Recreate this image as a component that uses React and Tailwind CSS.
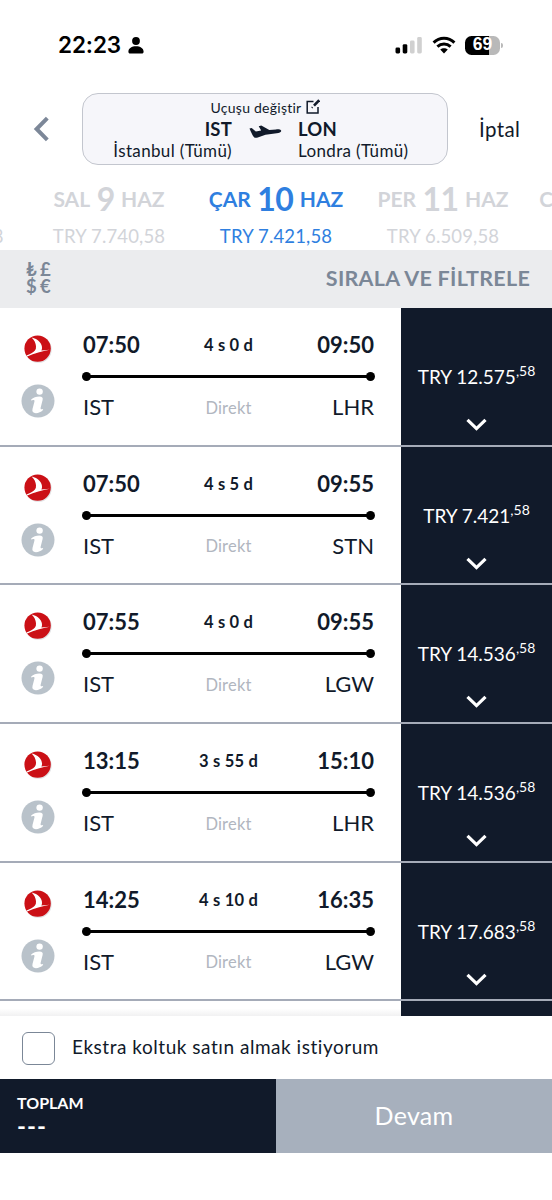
import React, { useState } from "react";

const flights = [
  { dep: "07:50", arr: "09:50", duration: "4 s 0 d", to: "LHR", price: "12.575" },
  { dep: "07:50", arr: "09:55", duration: "4 s 5 d", to: "STN", price: "7.421" },
  { dep: "07:55", arr: "09:55", duration: "4 s 0 d", to: "LGW", price: "14.536" },
  { dep: "13:15", arr: "15:10", duration: "3 s 55 d", to: "LHR", price: "14.536" },
  { dep: "14:25", arr: "16:35", duration: "4 s 10 d", to: "LGW", price: "17.683" },
];

function StatusBar() {
  return (
    <div className="flex h-[93px] items-start justify-between pt-[31px] pr-[49px] pl-[58px]">
      <div className="flex h-7 items-center gap-[7px] font-['Inter',sans-serif] text-[22.5px] font-semibold text-black">
        <span className="tracking-[-0.1px]">22:23</span>
        <svg width="16" height="17" viewBox="0 0 16 17" fill="currentColor">
          <circle cx="8" cy="4" r="3.9" />
          <path d="M0.4 14.6c0-3.4 3.4-5.4 7.6-5.4s7.6 2 7.6 5.4c0 1.4-.6 2-1.9 2H2.3c-1.3 0-1.9-.6-1.9-2z" />
        </svg>
      </div>
      <div className="flex h-7 items-center">
        <svg width="28" height="18" viewBox="0 0 28 18">
          <rect x="0.5" y="11.5" width="4.6" height="6" rx="1.4" fill="#000" />
          <rect x="7.7" y="8.2" width="4.6" height="9.3" rx="1.4" fill="#000" />
          <rect x="15" y="4.6" width="4.6" height="12.9" rx="1.4" fill="#d0d0d0" />
          <rect x="22.2" y="1" width="4.6" height="16.5" rx="1.4" fill="#d0d0d0" />
        </svg>
        <svg className="ml-[9px]" width="24" height="18" viewBox="0 0 24 18">
          <g fill="none" stroke="#000" strokeWidth="3">
            <path d="M1.6 6.6C7.5 0.9 16.5 0.9 22.4 6.6" />
            <path d="M5.4 10.6c3.8-3.5 9.4-3.5 13.2 0" />
          </g>
          <path d="M8.2 13.6c2.2-1.9 5.4-1.9 7.6 0L12 17.5z" fill="#000" />
        </svg>
        <div className="ml-[9.5px] flex h-[19px] w-[35px] items-center justify-center rounded-[6.5px] bg-[linear-gradient(90deg,#000_69%,#b9b9b9_69%)] font-['Liberation_Sans',sans-serif] text-[17.5px] leading-none font-bold text-white">
          69
        </div>
        <div className="ml-px h-[5px] w-[2px] rounded-r-full bg-[#b9b9b9]"></div>
      </div>
    </div>
  );
}

function Header() {
  return (
    <div className="flex h-[72px] items-center">
      <button className="ml-[33px] w-[49px]">
        <svg width="17" height="26" viewBox="0 0 17 26" fill="none" stroke="#7c8798" strokeWidth="4">
          <path d="M14.3 2.2L3.6 13l10.7 10.8" />
        </svg>
      </button>
      <div className="h-[72px] w-[366px] rounded-[16px] border border-[#c3c6ce] bg-[#f6f6fa] pt-[4px]">
        <div className="flex h-[18px] items-center justify-center gap-[5px] pl-px text-[14px] tracking-[0.25px]">
          <span>Uçuşu değiştir</span>
          <svg className="-mt-px" width="14" height="15" viewBox="0 0 14 15" fill="none" stroke="currentColor" strokeWidth="1.5">
            <path d="M7.5 2.5H1.2V14H12V8" />
            <path d="M5.8 8.8l.7-.7" strokeWidth="1.7" />
            <path d="M8 6.7L13.2 1.2" strokeWidth="2.6" />
          </svg>
        </div>
        <div className="flex">
          <div className="w-[149px] text-right">
            <div className="h-[24px] text-[18.5px] leading-[26px] font-bold tracking-[0.2px]">IST</div>
            <div className="mt-px text-[17px] leading-[20px] tracking-[0.35px]">İstanbul (Tümü)</div>
          </div>
          <svg className="mt-[9px] ml-[17px]" width="33" height="15" viewBox="0 0 33 15" fill="currentColor">
            <path d="M0.5 3.6l2.2-.7 4.100 3.500 5.400-.9L9.700 1.300l2.600-.8 8 4.600 6.800-.7c2.700-.2 4.700.3 5.100 1.300.3 1.200-1.900 2.100-4.500 2.500L16.500 9.700l-7.700 2.700c-1.300.5-2.800.6-3.800-.1C3.300 10.200 1.900 6.900.5 3.600z" />
          </svg>
          <div className="ml-[16px]">
            <div className="h-[24px] text-[18.5px] leading-[26px] font-bold tracking-[0.2px]">LON</div>
            <div className="mt-px text-[17px] leading-[20px] tracking-[0.35px]">Londra (Tümü)</div>
          </div>
        </div>
      </div>
      <button className="ml-[31px] text-[20.5px] tracking-[0.4px]">İptal</button>
    </div>
  );
}

function DayTab({ day, date, month, price, active }) {
  return (
    <div className={"flex w-[167px] shrink-0 flex-col items-center whitespace-nowrap " + (active ? "text-[#2f7fe0]" : "text-[#d2d4d9]")}>
      <div className="flex h-[34px] items-center gap-[6.5px] text-[21px] leading-[34px] font-bold">
        <span>{day}</span>
        <span className="text-[32px] font-bold tracking-[-0.6px]">{date}</span>
        <span>{month}</span>
      </div>
      <div className="mt-[9px] text-[18.5px] leading-[22px] tracking-[0.15px]">{price}</div>
    </div>
  );
}

function DayTabs() {
  return (
    <div className="flex h-[85px] justify-center overflow-hidden pt-[17px]">
      <DayTab day="PZT" date="8" month="HAZ" price="TRY 10.740,58" />
      <DayTab day="SAL" date="9" month="HAZ" price="TRY 7.740,58" />
      <DayTab day="ÇAR" date="10" month="HAZ" price="TRY 7.421,58" active />
      <DayTab day="PER" date="11" month="HAZ" price="TRY 6.509,58" />
      <DayTab day="CUM" date="12" month="HAZ" price="" />
    </div>
  );
}

function AirlineLogo() {
  return (
    <svg width="28" height="28" viewBox="0 0 28 28">
      <circle cx="14.4" cy="14.5" r="13.3" fill="#e2e2e4" />
      <circle cx="13.6" cy="13.6" r="13.2" fill="#cb1016" />
      <path
        d="M7.6 2.4C14 3.8 18.6 8.4 18 13.6c-.1.8-.3 1.3-.6 1.8l8.3-.6C18 16.2 10.5 18.3 3.2 21.6l-.7-1.2c1.7-.8 3.2-1.3 4.5-2 3.6-1.7 5.3-3.6 5-7.2C11.8 7.9 10.2 4.9 7.6 2.4z"
        fill="#fff"
      />
    </svg>
  );
}

function InfoIcon() {
  return (
    <svg width="34" height="34" viewBox="0 0 34 34">
      <circle cx="17" cy="17" r="16.5" fill="#b9c2ca" />
      <circle cx="18.6" cy="7.6" r="3.2" fill="#fff" />
      <path
        d="M10.2 15.4c2-1.8 5-2.9 8.1-2.9 3 0 3.900 1.300 3.300 3.600l-1.900 7.400c-.3 1.500.1 2 1.300 1.700l1.200-.3-.4 1.400c-1.800 1.700-4.300 2.900-6.900 2.900-2.900 0-4-1.500-3.400-4.100l1.900-7.300c.3-1.400-.1-1.900-1.300-1.700l-2 .4z"
        fill="#fff"
      />
    </svg>
  );
}

function FlightRow({ flight }) {
  return (
    <div className="flex h-[138.7px] shrink-0 border-b-2 border-[#a5abb8]">
      <div className="w-[83px] pt-[27px]">
        <div className="ml-[24px]">
          <AirlineLogo />
        </div>
        <div className="mt-[21px] ml-[21px]">
          <InfoIcon />
        </div>
      </div>
      <div className="w-[291px] pt-[25px]">
        <div className="grid h-6 grid-cols-[1fr_auto_1fr] items-center text-[22px] leading-6 font-bold">
          <span>{flight.dep}</span>
          <span className="text-[16.5px] tracking-[0.2px]">{flight.duration}</span>
          <span className="text-right">{flight.arr}</span>
        </div>
        <div className="mt-[15px] -ml-px flex h-[9px] w-[293px] items-center">
          <i className="h-[9px] w-[9px] rounded-full bg-black"></i>
          <i className="-mx-px h-[3px] flex-1 bg-black"></i>
          <i className="h-[9px] w-[9px] rounded-full bg-black"></i>
        </div>
        <div className="mt-[12.5px] grid h-[26px] grid-cols-[1fr_auto_1fr] items-center text-[22px] leading-[26px]">
          <span>IST</span>
          <span className="pt-px text-[16.5px] tracking-[0.2px] text-[#b1b6c0]">Direkt</span>
          <span className="text-right">{flight.to}</span>
        </div>
      </div>
      <div className="ml-[27px] flex flex-1 flex-col items-center bg-[#111a2a] pt-[56px] text-white">
        <div className="flex h-[26px] text-[19px] leading-[26px]">
          <span>TRY {flight.price}</span>
          <span className="-mt-[6px] text-[14px]">,58</span>
        </div>
        <svg className="mt-[28px]" width="21" height="14" viewBox="0 0 21 14" fill="none" stroke="#fff" strokeWidth="3.2">
          <path d="M1.5 1.8l9 8.8 9-8.8" />
        </svg>
      </div>
    </div>
  );
}

export default function App() {
  const [extraSeat, setExtraSeat] = useState(false);

  return (
    <div className="flex h-[1200px] w-[552px] flex-col overflow-hidden bg-white font-['Lato',sans-serif] text-[#111a2a]">
      <StatusBar />
      <Header />
      <DayTabs />

      {/* Currency and filter bar */}
      <div className="flex h-[58px] shrink-0 items-center justify-between bg-[#ebecee] pr-[22px] pb-[2px] pl-[26px] font-bold text-[#7b8797]">
        <div className="grid grid-cols-[14px_12px] text-[18.5px] leading-[17px]">
          <span>₺</span>
          <span>£</span>
          <span>$</span>
          <span>€</span>
        </div>
        <span className="text-[21.5px] tracking-[0.25px]">SIRALA VE FİLTRELE</span>
      </div>

      {/* Flight list */}
      <div className="flex h-[708px] shrink-0 flex-col overflow-hidden">
        {flights.map((flight, i) => (
          <FlightRow key={i} flight={flight} />
        ))}
        <div className="flex flex-1">
          <div className="w-[401px] bg-linear-to-b from-white from-50% to-[#f1f1f2]"></div>
          <div className="flex-1 bg-[#111a2a]"></div>
        </div>
      </div>

      <div className="flex h-[63px] shrink-0 items-center pl-[22px]">
        <button
          onClick={() => setExtraSeat(!extraSeat)}
          className="mt-0.5 h-[33px] w-[33px] rounded-[6px] border-[1.5px] border-[#7b8797]"
        >
          {extraSeat ? "✓" : ""}
        </button>
        <span className="ml-[17px] text-[19px] tracking-[0.53px]">Ekstra koltuk satın almak istiyorum</span>
      </div>

      <div className="flex h-[74px] shrink-0">
        <div className="w-1/2 bg-[#111a2a] pt-[14px] pl-[17px] text-white">
          <div className="text-[16px] leading-[20px] font-bold">TOPLAM</div>
          <div className="pt-[2px] text-[24px] leading-[22px] font-bold tracking-[1px]">---</div>
        </div>
        <button className="w-1/2 bg-[#a7b0bd] text-[25px] tracking-[0.3px] text-white">Devam</button>
      </div>
    </div>
  );
}
